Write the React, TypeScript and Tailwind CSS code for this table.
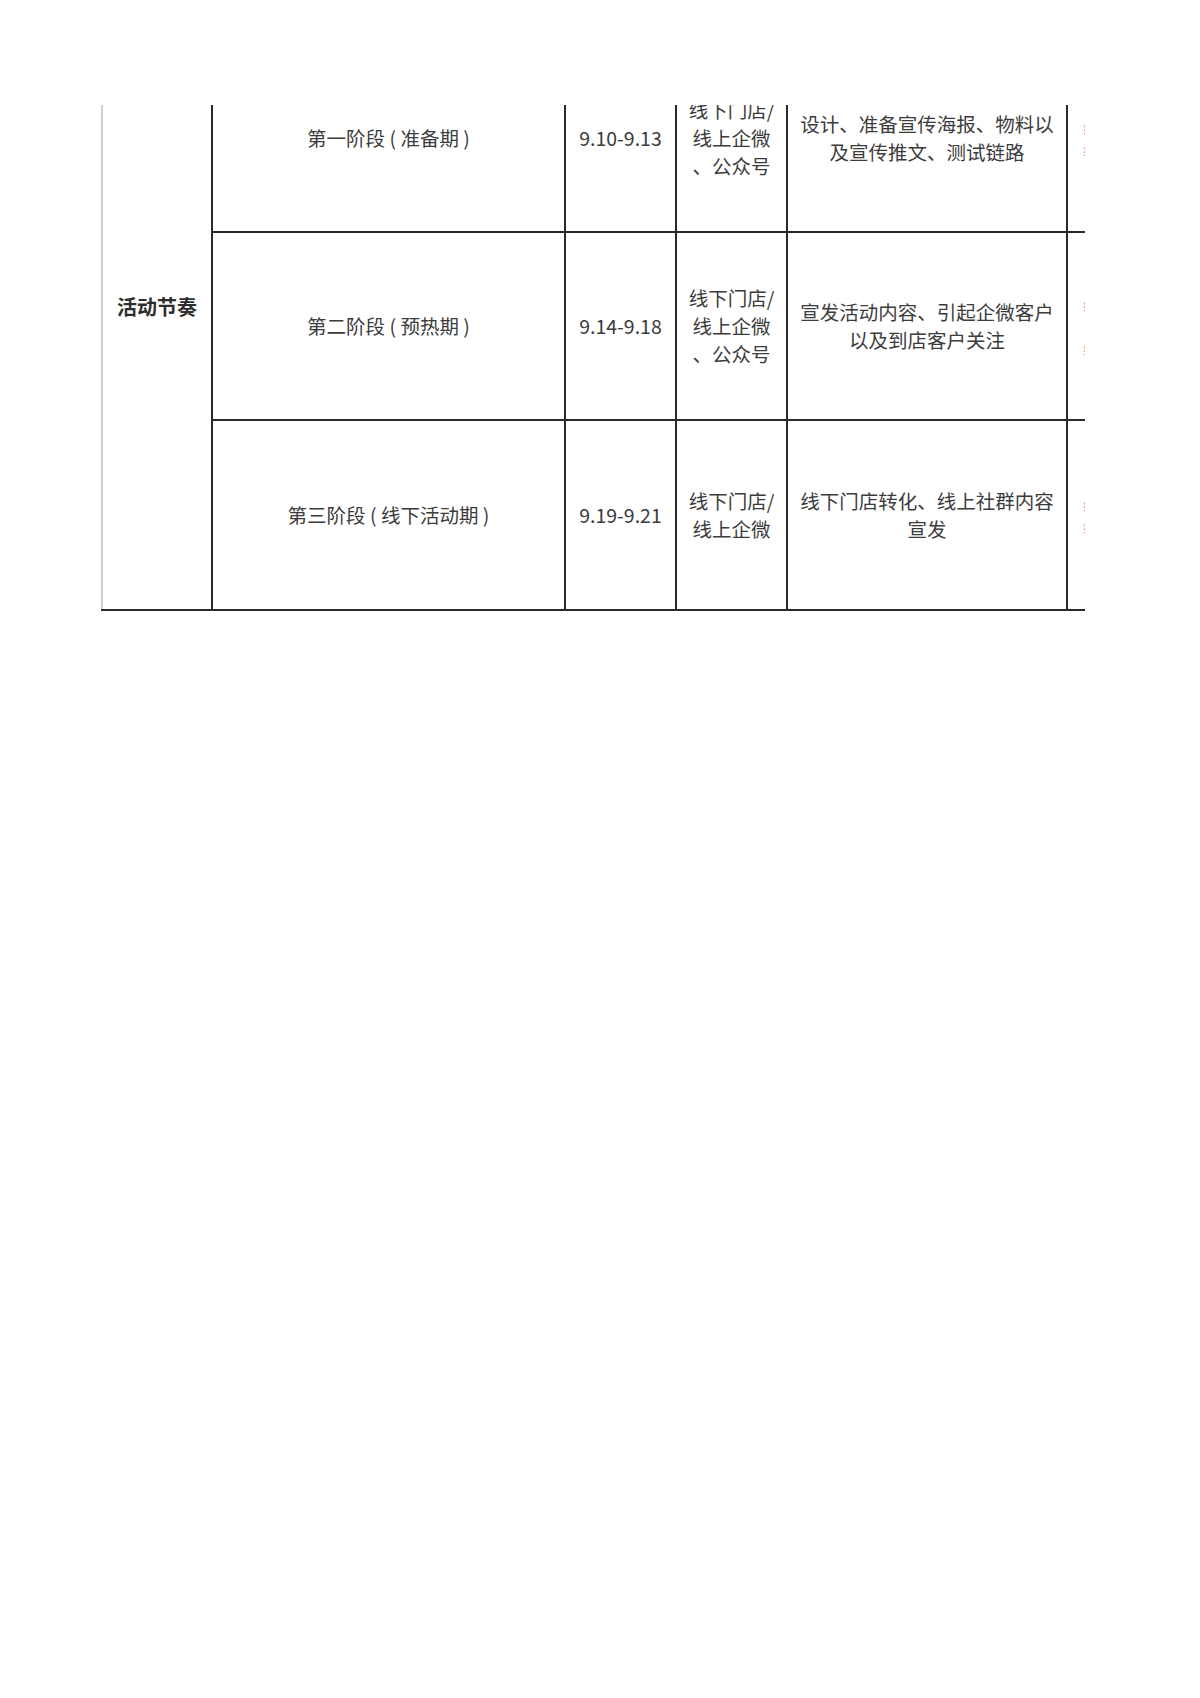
import React from 'react';

const rows = [
  {
    stage: '第一阶段 ( 准备期 )',
    date: '9.10-9.13',
    channel: ['线下门店/', '线上企微', '、公众号'],
    desc: ['设计、准备宣传海报、物料以', '及宣传推文、测试链路'],
    note: ['线上企微', '线下门店'],
  },
  {
    stage: '第二阶段 ( 预热期 )',
    date: '9.14-9.18',
    channel: ['线下门店/', '线上企微', '、公众号'],
    desc: ['宣发活动内容、引起企微客户', '以及到店客户关注'],
    note: ['线上企微', '', '线下门店'],
  },
  {
    stage: '第三阶段 ( 线下活动期 )',
    date: '9.19-9.21',
    channel: ['线下门店/', '线上企微'],
    desc: ['线下门店转化、线上社群内容', '宣发'],
    note: ['线上企微', '线下门店'],
  },
];

function Lines({ lines }: { lines: string[] }) {
  return (
    <div className="flex flex-col items-center">
      {lines.map((l, i) => (
        <span key={i} className="block whitespace-nowrap">
          {l || '\u00a0'}
        </span>
      ))}
    </div>
  );
}

export default function App() {
  return (
    <div
      className="w-[1200px] h-[1698px] bg-white pt-[105px] pl-[101px] text-[#3c3c3c] text-[19.5px] leading-[28px]"
      style={{ fontFamily: '"Noto Sans CJK SC", "Noto Sans", sans-serif' }}
    >
      {/* clipped sheet: first row is cut at the top, last column at the right */}
      <div className="w-[984px] h-[506px] overflow-hidden">
        <div className="-mt-[60px] flex border-b-2 border-[#2a2a2a]">
          <div className="w-[110px] shrink-0 border-l-2 border-[#cfcfcf] flex justify-center pt-[248px]">
            <span className="font-bold text-[#2e2e2e] text-[20px]">活动节奏</span>
          </div>
          <div className="flex flex-col">
            {rows.map((r, i) => (
              <div
                key={r.date}
                className={`flex h-[188px] ${i < rows.length - 1 ? 'border-b-2 border-[#2a2a2a]' : ''}`}
              >
                <div className="w-[353px] shrink-0 border-l-2 border-[#2a2a2a] flex items-center justify-center text-center whitespace-pre">
                  {r.stage}
                </div>
                <div className="w-[111px] shrink-0 border-l-2 border-[#2a2a2a] flex items-center justify-center">
                  {r.date}
                </div>
                <div className="w-[111px] shrink-0 border-l-2 border-[#2a2a2a] flex items-center justify-center">
                  <Lines lines={r.channel} />
                </div>
                <div className="w-[280px] shrink-0 border-l-2 border-[#2a2a2a] flex items-center justify-center">
                  <Lines lines={r.desc} />
                </div>
                <div className="w-[200px] shrink-0 border-l-2 border-[#2a2a2a] flex items-center pl-[15px] text-[#e79a9a] text-[14px] leading-[22px]">
                  <div className="flex flex-col">
                    {r.note.map((n, j) => (
                      <span key={j} className="whitespace-nowrap">
                        {n || '\u00a0'}
                      </span>
                    ))}
                  </div>
                </div>
              </div>
            ))}
          </div>
        </div>
      </div>
    </div>
  );
}
